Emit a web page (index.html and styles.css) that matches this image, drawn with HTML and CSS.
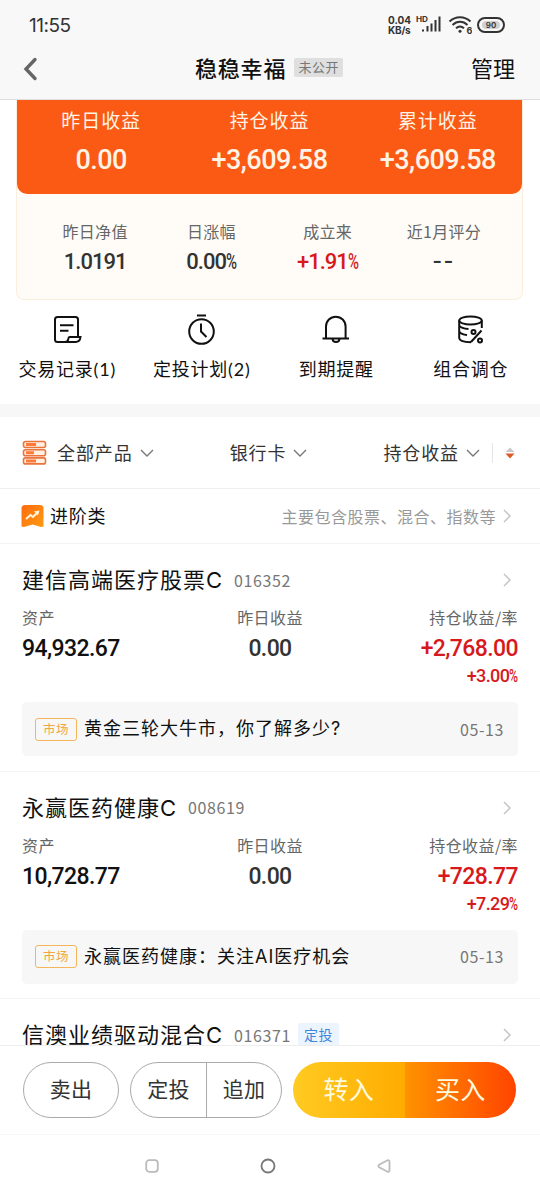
FILE: index.html
```html
<!DOCTYPE html>
<html lang="zh-CN">
<head>
    <meta charset="UTF-8">
    <meta name="viewport" content="width=device-width, initial-scale=1.0">
    <title>稳稳幸福</title>
    <link rel="stylesheet" href="styles.css">
</head>
<body>
    <div class="page">
        <header class="header">
            <div class="status">
                <span class="time">11:55</span>
                <div class="status-right">
                    <div class="speed"><div>0.04</div><div>KB/s</div></div>
                    <svg class="signal" width="26" height="20" viewBox="0 0 26 20">
                        <text x="0" y="7" font-size="7" font-weight="700" textLength="12" lengthAdjust="spacingAndGlyphs">HD</text>
                        <path d="M7 14.500v2M11.500 11v5.500M15.500 8.500v8M19.500 5v11.500M23.500 1.500v15" stroke="#333" stroke-width="2" fill="none"/>
                    </svg>
                    <svg class="wifi" width="24" height="20" viewBox="0 0 24 20">
                        <path d="M1.500 6.500C7.500 .8 16.500 .8 22.500 6.500M4.500 10c4.500-4.300 10.500-4.300 15 0M8 13.300c2.400-2.300 5.600-2.300 8 0" stroke="#333" stroke-width="1.900" fill="none"/>
                        <circle cx="12" cy="16.300" r="1.500" fill="#333"/>
                        <text x="18.500" y="18.500" font-size="9" font-weight="700">6</text>
                    </svg>
                    <div class="battery"><span>90</span></div>
                </div>
            </div>
            <div class="titlebar">
                <svg width="16" height="24" viewBox="0 0 16 24"><path d="M12 2.500L3 12l9 9.500" stroke="#666" stroke-width="3.400" fill="none" stroke-linecap="round"/></svg>
                <div class="title">稳稳幸福<span class="private">未公开</span></div>
                <a class="manage">管理</a>
            </div>
        </header>

        <main class="content">
            <section class="card">
                <div class="card-top">
                    <div><p>昨日收益</p><b>0.00</b></div>
                    <div><p>持仓收益</p><b>+3,609.58</b></div>
                    <div><p>累计收益</p><b>+3,609.58</b></div>
                </div>
                <div class="card-bottom">
                    <div><p>昨日净值</p><b>1.0191</b></div>
                    <div><p>日涨幅</p><b>0.00<i>%</i></b></div>
                    <div><p>成立来</p><b class="red">+1.91<i>%</i></b></div>
                    <div><p>近1月评分</p><b class="dash">--</b></div>
                </div>
            </section>

            <nav class="menu">
                <div>
                    <svg width="32" height="32" viewBox="0 0 32 32" fill="none" stroke="#111" stroke-width="2">
                        <path d="M27 22V5.500Q27 3 24.500 3H6.500Q4 3 4 5.500V25.500Q4 28 6.500 28H24.500Q29 28 29.500 23H18.500Q17.500 23 17.300 25 17 28 14 28M9 11.200h13.500M9 16.800h8.500"/>
                    </svg>
                    <p>交易记录(1)</p>
                </div>
                <div>
                    <svg width="32" height="32" viewBox="0 0 32 32" fill="none" stroke="#111" stroke-width="2">
                        <circle cx="15.500" cy="17.500" r="12.300"/><path d="M11 1.500h9M15 9.500v8l5.500 5.500"/>
                    </svg>
                    <p>定投计划(2)</p>
                </div>
                <div>
                    <svg width="32" height="32" viewBox="0 0 32 32" fill="none" stroke="#111" stroke-width="2">
                        <path d="M6 24.500V12.500a9.800 9.800 0 0 1 19.600 0V24.500M2.500 24.500h26.500M12.500 25c.3 4 6.700 4 7 0"/>
                    </svg>
                    <p>到期提醒</p>
                </div>
                <div>
                    <svg width="32" height="32" viewBox="0 0 32 32" fill="none" stroke="#111" stroke-width="2">
                        <ellipse cx="15.500" cy="6.500" rx="11.300" ry="4"/>
                        <path d="M4.200 6.500V24q0 4 11.800 4.200M26.800 6.500V14M4.200 11.500q2 3 9.300 3.500M4.200 17.500q2 3 7.800 3.500M26.500 16.500L16 28"/>
                        <circle cx="18.500" cy="18" r="2"/><circle cx="25" cy="26.500" r="2"/>
                    </svg>
                    <p>组合调仓</p>
                </div>
            </nav>

            <div class="filter">
                <div class="filter-all">
                    <svg width="25" height="26" viewBox="0 0 25 26" fill="#fff0e2" stroke="#e9743c" stroke-width="1.600">
                        <rect x="1.500" y="1.500" width="22" height="6" rx="2"/><rect x="1.500" y="9.700" width="22" height="6" rx="2"/><rect x="1.500" y="17.900" width="22" height="6" rx="2"/>
                        <path d="M4 4.500h10M4 12.700h8M4 20.900h10" stroke="#ff7a38" stroke-width="3"/>
                    </svg>
                    <span>全部产品</span>
                    <svg class="down" width="14" height="10" viewBox="0 0 14 10"><path d="M1 2l6 6 6-6"/></svg>
                </div>
                <div class="filter-bank">
                    <span>银行卡</span>
                    <svg class="down" width="14" height="10" viewBox="0 0 14 10"><path d="M1 2l6 6 6-6"/></svg>
                </div>
                <div class="filter-sort">
                    <span>持仓收益</span>
                    <svg class="down" width="14" height="10" viewBox="0 0 14 10"><path d="M1 2l6 6 6-6"/></svg>
                    <svg class="sort" width="10" height="12" viewBox="0 0 10 12"><path d="M.5 5L5 .5 9.500 5z" fill="#c9c9c9"/><path d="M.5 6.500L5 11.500 9.500 6.500z" fill="#dd5a28"/></svg>
                </div>
            </div>

            <div class="category">
                <svg width="23" height="24" viewBox="0 0 23 24">
                    <defs><linearGradient id="flag" x1="0" y1="0" x2="1" y2="1"><stop offset="0" stop-color="#ff6b10"/><stop offset="1" stop-color="#ff9a12"/></linearGradient></defs>
                    <path d="M4 1h15q3.500 0 3.500 3.500V22.500L20 23 11.500 20.500 3 23 .5 22.500V4.500Q.5 1 4 1z" fill="url(#flag)"/>
                    <path d="M5 15l4.500-4 2.500 2L16.500 8.500" fill="none" stroke="#fff4dc" stroke-width="2"/><path d="M13 7.500L18.500 6.500 17 11.500z" fill="#fff4dc"/>
                </svg>
                <span class="category-name">进阶类</span>
                <span class="category-desc">主要包含股票、混合、指数等</span>
                <svg class="right" width="10" height="14" viewBox="0 0 10 14"><path d="M2 1l6 6-6 6"/></svg>
            </div>

            <article class="fund">
                <div class="fund-head">
                    <h2>建信高端医疗股票C</h2><span class="code">016352</span>
                    <svg class="right" width="10" height="14" viewBox="0 0 10 14"><path d="M2 1l6 6-6 6"/></svg>
                </div>
                <div class="fund-data">
                    <div><p>资产</p><b>94,932.67</b></div>
                    <div><p>昨日收益</p><b class="gray">0.00</b></div>
                    <div><p>持仓收益/率</p><b class="red">+2,768.00</b><b class="rate red">+3.00<i>%</i></b></div>
                </div>
                <div class="news"><span class="tag">市场</span><span class="news-title">黄金三轮大牛市，你了解多少?</span><span class="date">05-13</span></div>
            </article>

            <article class="fund">
                <div class="fund-head">
                    <h2>永赢医药健康C</h2><span class="code">008619</span>
                    <svg class="right" width="10" height="14" viewBox="0 0 10 14"><path d="M2 1l6 6-6 6"/></svg>
                </div>
                <div class="fund-data">
                    <div><p>资产</p><b>10,728.77</b></div>
                    <div><p>昨日收益</p><b class="gray">0.00</b></div>
                    <div><p>持仓收益/率</p><b class="red">+728.77</b><b class="rate red">+7.29<i>%</i></b></div>
                </div>
                <div class="news"><span class="tag">市场</span><span class="news-title">永赢医药健康：关注AI医疗机会</span><span class="date">05-13</span></div>
            </article>

            <article class="fund">
                <div class="fund-head">
                    <h2>信澳业绩驱动混合C</h2><span class="code">016371</span><span class="plan">定投</span>
                    <svg class="right" width="10" height="14" viewBox="0 0 10 14"><path d="M2 1l6 6-6 6"/></svg>
                </div>
            </article>
        </main>

        <footer class="actions">
            <button class="sell">卖出</button>
            <div class="group">
                <button>定投</button>
                <button>追加</button>
            </div>
            <div class="trade">
                <button class="in">转入</button>
                <button class="buy">买入</button>
            </div>
        </footer>

        <div class="navbar">
            <svg width="16" height="16" viewBox="0 0 16 16"><rect x="2.200" y="2.200" width="11.600" height="11.600" rx="3" stroke="#bbb"/></svg>
            <svg width="16" height="16" viewBox="0 0 16 16"><circle cx="8" cy="8" r="6.500" stroke="#777"/></svg>
            <svg width="16" height="16" viewBox="0 0 16 16"><path d="M11.500 2.300Q13.500 1.500 13.500 4V12Q13.500 14.500 11.500 13.700L3.200 9.300Q1.500 8 3.200 6.700z" stroke="#bbb"/></svg>
        </div>
    </div>
</body>
</html>
```
FILE: styles.css
```css
* {
    box-sizing: border-box;
}

body {
    margin: 0;
    font-family: "Noto Sans CJK SC", sans-serif;
    color: #111;
    background-color: #fff;
}

p, h2 {
    margin: 0;
    font-weight: 400;
}

svg {
    display: block;
    flex: none;
}

.page {
    width: 540px;
    height: 1200px;
    display: flex;
    flex-direction: column;
    overflow: hidden;
}

/* header */
.header {
    height: 100px;
    background-color: #f8f8f8;
    border-bottom: 1px solid #dedede;
    flex: none;
}

.status {
    height: 40px;
    padding: 10px 35px 0 29px;
    display: flex;
    justify-content: space-between;
    align-items: center;
    color: #333;
}

.time {
    font-family: Inter, sans-serif;
    font-size: 19px;
    letter-spacing: -0.5px;
    font-weight: 400;
}

.status-right {
    display: flex;
    align-items: center;
}

.status-right svg {
    fill: #333;
    font-family: Inter, sans-serif;
}

.speed {
    width: 28px;
    font: 700 10px/10px Inter, sans-serif;
}

.speed div + div {
    letter-spacing: -0.2px;
}

.wifi {
    margin: 0 5px 0 6px;
}

.battery {
    width: 28px;
    height: 16px;
    padding: 2px 3px;
    border: 2px solid #333;
    border-radius: 8px;
    font: 600 8px/8px Inter, sans-serif;
    text-align: center;
}

.battery span {
    display: block;
    background-color: #d0d0d0;
    border-radius: 4px;
}

.titlebar {
    display: flex;
    align-items: center;
    height: 56px;
    padding: 0 25px 0 23px;
    font-size: 22px;
}

.titlebar svg {
    margin-top: 2px;
}

.title {
    flex: 1;
    margin-left: 156px;
    display: flex;
    align-items: center;
    line-height: 30px;
    letter-spacing: 0.8px;
    font-weight: 500;
    padding-bottom: 2px;
}

.manage {
    padding-bottom: 2px;
}

.private {
    margin-left: 8px;
    width: 49px;
    height: 19px;
    background-color: #dfdfdf;
    border-radius: 2px;
    color: #777;
    font-size: 13px;
    line-height: 17px;
    letter-spacing: 0.5px;
    text-align: center;
    font-weight: 400;
}

.content {
    flex: 1;
    min-height: 0;
    overflow: hidden;
}

b {
    display: block;
    font-family: Roboto, sans-serif;
    font-size: 23px;
    font-weight: 500;
    line-height: 28px;
    letter-spacing: -0.6px;
}

/* narrow percent sign */
b i {
    display: inline-block;
    width: 0.48em;
    font-style: normal;
    transform: scaleX(0.68);
    transform-origin: left;
}

.red {
    color: #d7191c;
}

.gray {
    color: #333;
}

/* summary card */
.card {
    width: 507px;
    height: 200px;
    margin-left: 16px;
    border: 1px solid #faeedd;
    border-top: 0;
    border-radius: 0 0 8px 8px;
    background-color: #fffcf7;
}

.card-top {
    height: 94px;
    padding-top: 6px;
    display: grid;
    grid-template-columns: repeat(3, 1fr);
    background-color: #fb5a14;
    border-radius: 0 0 10px 10px;
    color: #fff3e6;
    text-align: center;
}

.card-top p {
    font-size: 19px;
    line-height: 27px;
    letter-spacing: 0.9px;
}

.card-top b {
    margin-top: 11px;
    font-size: 27px;
    line-height: 32px;
    letter-spacing: -0.5px;
}

.card-bottom {
    padding: 25px 20px 0;
    display: grid;
    grid-template-columns: repeat(4, 1fr);
    text-align: center;
    color: #333;
}

.card-bottom p {
    color: #666;
    font-size: 16px;
    line-height: 24px;
    letter-spacing: 0.3px;
}

.card-bottom b {
    margin-top: 5px;
    font-size: 22px;
    letter-spacing: -1px;
}

.card-bottom .red {
    color: #d7191c;
}

.card-bottom .dash {
    letter-spacing: 2px;
    transform: scaleX(1.2);
}

/* shortcuts */
.menu {
    height: 104px;
    padding: 14px 2px 0 0;
    display: grid;
    grid-template-columns: repeat(4, 1fr);
    justify-items: center;
    text-align: center;
}

.menu svg {
    margin: 0 auto;
}

.menu p {
    margin-top: 9px;
    font-family: Lato, "Noto Sans CJK SC", sans-serif;
    font-size: 18px;
    line-height: 28px;
    letter-spacing: 0.8px;
}

.filter {
    height: 85px;
    padding: 0 25px 0 22px;
    display: flex;
    justify-content: space-between;
    align-items: center;
    border-top: 13px solid #f7f7f7;
    border-bottom: 1px solid #eee;
    color: #333;
    font-size: 18px;
    letter-spacing: 0.9px;
}

.filter div {
    display: flex;
    align-items: center;
}

.filter span {
    padding-bottom: 1px;
}

.filter-all span {
    margin-left: 10px;
}

.down {
    margin-left: 7px;
    fill: none;
    stroke: #777;
    stroke-width: 1.4;
}

.sort {
    box-sizing: content-box;
    margin-left: 12px;
    padding: 4px 0 4px 12px;
    border-left: 1px solid #e5e5e5;
}

.right {
    margin-left: auto;
    fill: none;
    stroke: #c4c4c4;
    stroke-width: 1.5;
}

.category {
    height: 55px;
    padding: 0 28px 0 21px;
    display: flex;
    align-items: center;
    border-bottom: 1px solid #f4f4f4;
}

.category-name {
    margin-left: 6px;
    padding-bottom: 2px;
    font-size: 18px;
    letter-spacing: 0.8px;
}

.category-desc {
    margin-left: auto;
    padding-bottom: 1px;
    color: #999;
    font-size: 16px;
    letter-spacing: 0.5px;
}

.category .right {
    margin-left: 6px;
}

/* fund list */
.fund {
    height: 227.5px;
    padding: 22px 22px 0;
    border-bottom: 1px solid #f4f4f4;
}

.fund-head {
    height: 28px;
    padding-right: 6px;
    display: flex;
    align-items: center;
}

.fund h2 {
    font-family: Inter, "Noto Sans CJK SC", sans-serif;
    font-size: 22px;
    letter-spacing: 1px;
    line-height: 28px;
}

.code {
    margin-left: 11px;
    padding-bottom: 1px;
    color: #777;
    font-size: 16px;
    letter-spacing: 0.6px;
}

.plan {
    margin-left: 7px;
    width: 41px;
    height: 24px;
    background-color: #ecf5ff;
    border-radius: 2px;
    color: #3f86d8;
    font-size: 14px;
    line-height: 23px;
    letter-spacing: 0.5px;
    text-align: center;
}

.fund-data {
    height: 94px;
    padding-top: 13px;
    display: grid;
    grid-template-columns: repeat(3, 1fr);
}

.fund-data p {
    color: #666;
    font-size: 16px;
    line-height: 21px;
    letter-spacing: 0.4px;
}

.fund-data b {
    margin-top: 7px;
}

.fund-data div:nth-child(2) {
    text-align: center;
}

.fund-data div:nth-child(3) {
    text-align: right;
}

.fund-data .rate {
    margin-top: 1px;
    font-size: 18px;
    line-height: 24px;
}

.news {
    height: 54px;
    margin-top: 14px;
    padding: 0 14px 0 13px;
    display: flex;
    align-items: center;
    background-color: #f7f7f7;
    border-radius: 5px;
}

.tag {
    width: 42px;
    height: 23px;
    border: 1px solid #f3b65c;
    border-radius: 3px;
    color: #f0a63c;
    font-size: 12.5px;
    line-height: 20px;
    letter-spacing: 0.5px;
    text-align: center;
}

.news-title {
    margin-left: 7px;
    font-family: Inter, "Noto Sans CJK SC", sans-serif;
    font-size: 18px;
    line-height: 26px;
    letter-spacing: 1px;
}

.date {
    margin-left: auto;
    padding-bottom: 1px;
    color: #777;
    font-size: 16px;
    letter-spacing: 0.6px;
}

/* bottom bar */
.actions {
    height: 90px;
    padding: 16px 24px 0 23px;
    display: flex;
    flex: none;
    border-top: 1px solid #eee;
    border-bottom: 1px solid #f7f7f7;
}

button {
    height: 56px;
    padding: 0 0 4px;
    border: none;
    background: none;
    color: #333;
    font-family: inherit;
    font-size: 21px;
    letter-spacing: 0.3px;
}

.sell {
    width: 96px;
    border: 1px solid #aaa;
    border-radius: 28px;
}

.group {
    width: 152px;
    height: 56px;
    margin-left: 11px;
    display: flex;
    border: 1px solid #aaa;
    border-radius: 28px;
}

.group button {
    width: 50%;
    height: 54px;
}

.group button + button {
    border-left: 1px solid #aaa;
}

.trade {
    margin-left: 11px;
    width: 223px;
    height: 56px;
    display: flex;
    border-radius: 28px;
    overflow: hidden;
}

.trade button {
    width: 50%;
    color: #fffbe0;
    font-size: 25px;
}

.in {
    background: linear-gradient(to right, #ffcb22, #ffab00);
}

.buy {
    background: linear-gradient(to right, #ff9200, #ff4400);
}

.navbar {
    height: 65px;
    padding: 0 148px 4px 144px;
    display: flex;
    flex: none;
    justify-content: space-between;
    align-items: center;
}

.navbar svg {
    fill: none;
    stroke-width: 1.8;
}
```
